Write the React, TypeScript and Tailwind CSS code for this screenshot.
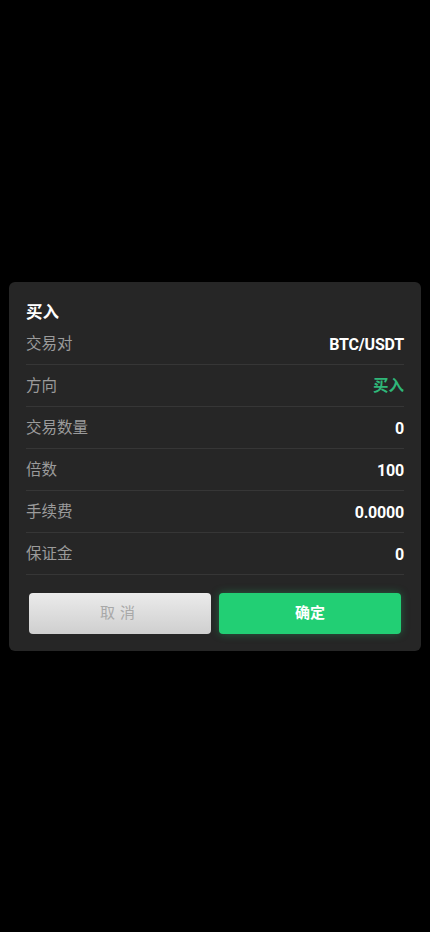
const rows: { label: string; value: string; green?: boolean }[] = [
  { label: "交易对", value: "BTC/USDT" },
  { label: "方向", value: "买入", green: true },
  { label: "交易数量", value: "0" },
  { label: "倍数", value: "100" },
  { label: "手续费", value: "0.0000" },
  { label: "保证金", value: "0" },
];

export default function App() {
  return (
    <div
      className="flex min-h-[932px] items-center justify-center bg-black px-[9px]"
      style={{ fontFamily: 'Roboto, "Noto Sans CJK SC", sans-serif' }}
    >
      <div className="w-full rounded-[6px] bg-[#262626] px-[17px] pb-[17px] pt-[21px]">
        <h2 className="h-[20px] text-[16.5px] font-bold leading-[20px] text-white">买入</h2>
        <div>
          {rows.map((row) => (
            <div
              key={row.label}
              className="flex h-[42px] items-center justify-between border-b border-[#363636] pt-[3px]"
            >
              <span className="text-[15.5px] text-[#9b9b9b]">{row.label}</span>
              <span
                className={
                  row.green
                    ? "text-[15.5px] font-bold text-[#2fb779]"
                    : "text-[16px] font-bold tracking-[-0.2px] text-white"
                }
              >
                {row.value}
              </span>
            </div>
          ))}
        </div>
        <div className="mx-[3px] mt-[18px] grid grid-cols-2 gap-[8px]">
          <button className="h-[41px] rounded-[4px] bg-gradient-to-b from-[#ebebeb] to-[#cfcfcf] text-[15px] tracking-[5px] text-[#a8a8a8]">
            取消
          </button>
          <button className="h-[41px] rounded-[4px] bg-[#22cf74] text-[15px] font-bold text-white shadow-[0_0_8px_rgba(34,207,116,0.35)]">
            确定
          </button>
        </div>
      </div>
    </div>
  );
}
